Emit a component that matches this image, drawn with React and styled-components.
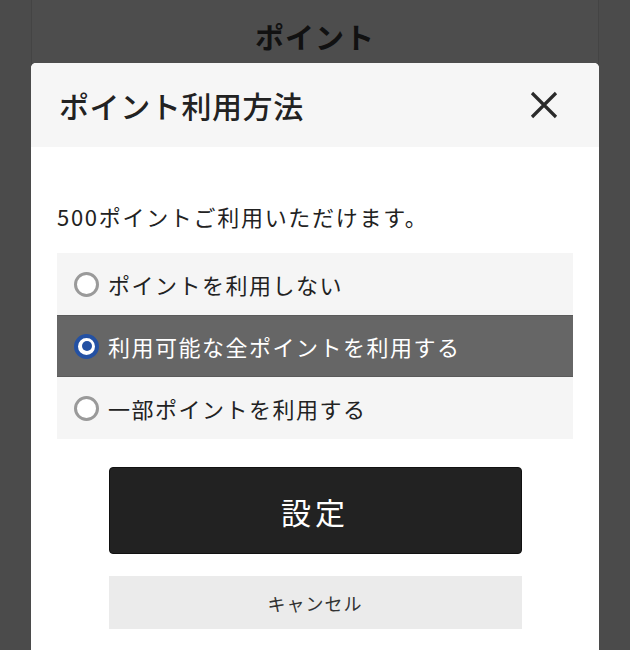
import React, { useState } from "react";
import styled, { createGlobalStyle } from "styled-components";

const GlobalStyle = createGlobalStyle`
  html, body {
    margin: 0;
    padding: 0;
    background: #4b4b4b;
  }
  body {
    font-family: "Noto Sans CJK JP", "Noto Sans", sans-serif;
    color: #222;
  }
`;

const Screen = styled.div`
  position: relative;
  width: 630px;
  height: 650px;
  overflow: hidden;
  background: #4b4b4b;
`;

const PageColumn = styled.div`
  width: 566px;
  height: 100%;
  margin-left: 31px;
  border-left: 1px solid #444;
  border-right: 1px solid #444;
  background: #4d4d4d;
`;

const PageTitle = styled.h1`
  margin: 0;
  padding-top: 14px;
  text-align: center;
  font-size: 29px;
  line-height: 44px;
  font-weight: 700;
  letter-spacing: 1px;
  color: #111;
`;

const Overlay = styled.div`
  position: absolute;
  inset: 0;
  display: flex;
  justify-content: center;
  padding-top: 63px;
`;

const Modal = styled.div`
  width: 568px;
  height: 640px;
  background: #fff;
  border-radius: 5px 5px 0 0;
  overflow: hidden;
`;

const Header = styled.div`
  height: 84px;
  display: flex;
  align-items: center;
  justify-content: space-between;
  padding: 0 40px 0 28px;
  background: #f6f6f6;
`;

const Title = styled.h2`
  margin: 0;
  font-size: 30px;
  font-weight: 500;
  letter-spacing: 0.6px;
  color: #222;
`;

const CloseButton = styled.button`
  width: 30px;
  height: 30px;
  padding: 0;
  border: 0;
  background: none;
  display: flex;
  align-items: center;
  justify-content: center;
  cursor: pointer;
`;

const Body = styled.div`
  padding: 53px 26px 0 26px;
  display: flex;
  flex-direction: column;
`;

const Lead = styled.p`
  margin: 0 0 20px;
  font-size: 22px;
  line-height: 33px;
  letter-spacing: 1.7px;
  color: #222;
`;

const OptionList = styled.div`
  display: flex;
  flex-direction: column;
  background: #f5f5f5;
`;

const Option = styled.label`
  height: 62px;
  box-sizing: border-box;
  display: flex;
  align-items: center;
  gap: 9px;
  padding-left: 17px;
  font-size: 22px;
  letter-spacing: 1.5px;
  cursor: pointer;
  background: ${(p) => (p.$active ? "#666" : "transparent")};
  color: ${(p) => (p.$active ? "#fff" : "#222")};
  border-top: 1px solid ${(p) => (p.$active ? "#5a5a5a" : "transparent")};
  border-bottom: 1px solid ${(p) => (p.$active ? "#5a5a5a" : "transparent")};
`;

const Radio = styled.span`
  width: 25px;
  height: 25px;
  box-sizing: border-box;
  border-radius: 50%;
  flex-shrink: 0;
  background: #fff;
  border: ${(p) => (p.$checked ? "4px solid #2451a3" : "3px solid #9a9a9a")};
  display: flex;
  align-items: center;
  justify-content: center;

  &::after {
    content: "";
    display: ${(p) => (p.$checked ? "block" : "none")};
    width: 10px;
    height: 10px;
    border-radius: 50%;
    background: #2451a3;
  }
`;

const Actions = styled.div`
  display: flex;
  flex-direction: column;
  align-items: center;
  gap: 22px;
  padding-top: 28px;
`;

const PrimaryButton = styled.button`
  width: 413px;
  height: 87px;
  border: 1px solid #111;
  border-radius: 4px;
  background: #222;
  color: #fff;
  font-family: inherit;
  font-size: 30px;
  letter-spacing: 4px;
  cursor: pointer;
`;

const CancelButton = styled.button`
  width: 413px;
  height: 53px;
  border: 0;
  background: #ebebeb;
  color: #333;
  font-family: inherit;
  font-size: 18px;
  letter-spacing: 1px;
  cursor: pointer;
`;

const options = [
  "ポイントを利用しない",
  "利用可能な全ポイントを利用する",
  "一部ポイントを利用する",
];

function App() {
  const [selected, setSelected] = useState(1);

  return (
    <>
      <GlobalStyle />
      <Screen>
        <PageColumn>
          <PageTitle>ポイント</PageTitle>
        </PageColumn>
        <Overlay>
          <Modal>
            <Header>
              <Title>ポイント利用方法</Title>
              <CloseButton aria-label="閉じる">
                <svg width="30" height="30" viewBox="0 0 30 30">
                  <path
                    d="M3 3 L27 27 M27 3 L3 27"
                    stroke="#2a2a2a"
                    strokeWidth="3.2"
                    fill="none"
                  />
                </svg>
              </CloseButton>
            </Header>
            <Body>
              <Lead>500ポイントご利用いただけます。</Lead>
              <OptionList>
                {options.map((label, i) => (
                  <Option
                    key={label}
                    $active={selected === i}
                    onClick={() => setSelected(i)}
                  >
                    <Radio $checked={selected === i} />
                    {label}
                  </Option>
                ))}
              </OptionList>
              <Actions>
                <PrimaryButton>設定</PrimaryButton>
                <CancelButton>キャンセル</CancelButton>
              </Actions>
            </Body>
          </Modal>
        </Overlay>
      </Screen>
    </>
  );
}

export default App;
